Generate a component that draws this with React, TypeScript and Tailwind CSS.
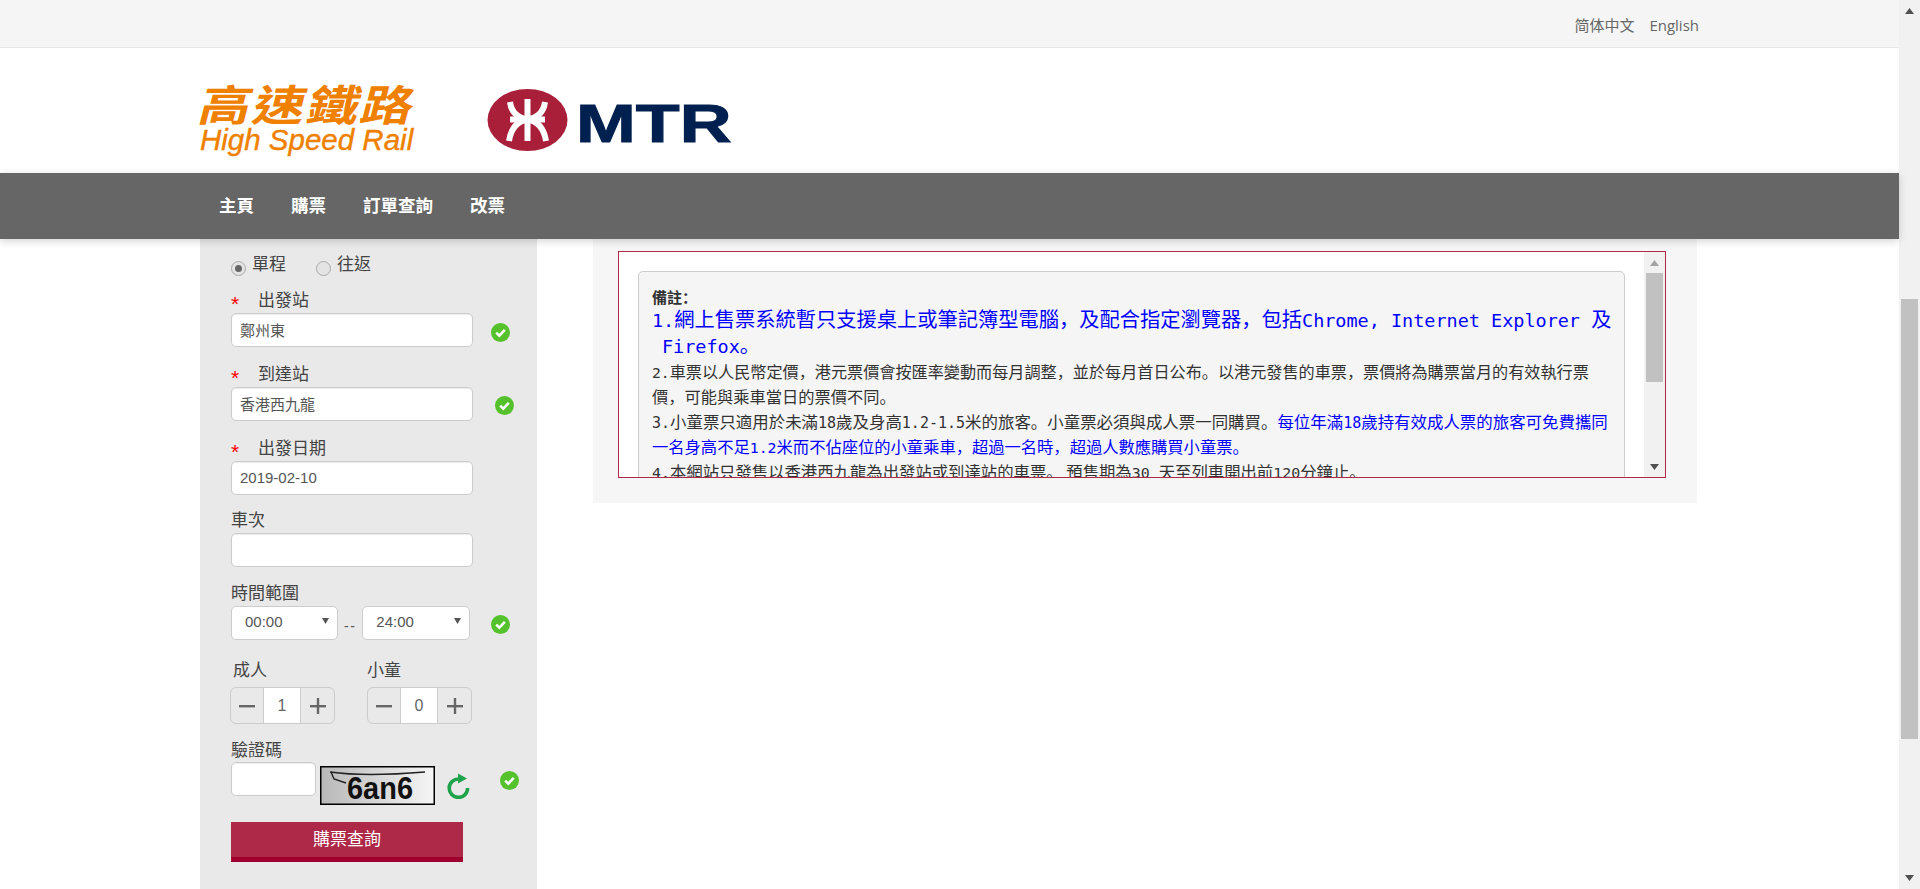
import React from "react";

const sans = "font-['Liberation_Sans','Noto_Sans_CJK_TC',sans-serif]";

function Check({ className = "" }: { className?: string }) {
  return (
    <svg width="19" height="19" viewBox="0 0 19 19" className={`shrink-0 ${className}`}>
      <circle cx="9.5" cy="9.5" r="9.5" fill="#55c22d" />
      <path d="M5.2 9.6 L8.3 12.6 L13.8 6.8" fill="none" stroke="#fff" strokeWidth="2.6" />
    </svg>
  );
}

function Field({ label, w = "w-[242px]", value }: { label?: string; w?: string; value?: string }) {
  return (
    <input
      readOnly
      aria-label={label}
      defaultValue={value}
      className={`${w} h-[34px] shrink-0 rounded-[5px] border border-[#cccccc] bg-white pb-[2px] pl-[8px] text-[15px] text-[#555555] shadow-[inset_0_1px_1px_rgba(0,0,0,0.075)] outline-none`}
    />
  );
}

function Label({ children, required }: { children: React.ReactNode; required?: boolean }) {
  return (
    <div className="flex h-[26px] items-center pt-[2px] text-[17px] leading-[24px] text-[#444444]">
      {required && <span className="w-[27px] translate-y-[3px] text-[21px] leading-[24px] text-[#ff0000]">*</span>}
      <span>{children}</span>
    </div>
  );
}

function TimeSelect({ value, w }: { value: string; w: string }) {
  return (
    <div className={`flex h-[34px] ${w} items-center justify-between rounded-[5px] border border-[#cccccc] bg-white pb-[2px] pl-[13px] pr-[6px] text-[15px] text-[#555555]`}>
      <span>{value}</span>
      <svg width="8" height="8" viewBox="0 0 8 8" className="mb-[2px] mr-[1px]">
        <path d="M0 1 H7 L3.5 7 Z" fill="#555555" />
      </svg>
    </div>
  );
}

function Stepper({ value }: { value: string }) {
  return (
    <div className="flex h-[37px] w-[105px] rounded-[6px] border border-[#cccccc] text-[16px] text-[#666666]">
      <div className="flex w-[32px] items-center justify-center">
        <svg width="16" height="16" viewBox="0 0 16 16"><rect x="0" y="7" width="16" height="2.4" fill="#666666" /></svg>
      </div>
      <div className="flex w-[38px] items-center justify-center border-x border-[#cccccc] bg-white">{value}</div>
      <div className="flex flex-1 items-center justify-center">
        <svg width="16" height="16" viewBox="0 0 16 16">
          <rect x="0" y="7" width="16" height="2.4" fill="#666666" />
          <rect x="6.8" y="0" width="2.4" height="16" fill="#666666" />
        </svg>
      </div>
    </div>
  );
}

function Captcha() {
  return (
    <svg width="115" height="39" viewBox="0 0 115 39" className="ml-[4px] mt-[4px] shrink-0">
      <defs>
        <linearGradient id="cg" x1="0" x2="1" y1="0" y2="0">
          <stop offset="0" stopColor="#b8b8b8" />
          <stop offset="1" stopColor="#f6f6f6" />
        </linearGradient>
      </defs>
      <rect x="0.75" y="0.75" width="113.5" height="37.5" fill="url(#cg)" stroke="#000" strokeWidth="1.5" />
      <path d="M10 6 Q45 11 105 6" fill="none" stroke="#222" strokeWidth="1.4" />
      <path d="M11 6 L14 13 L26 17" fill="none" stroke="#222" strokeWidth="1.4" />
      <text x="27" y="33" fontFamily="'Liberation Sans', sans-serif" fontWeight="700" fontSize="31" fill="#111" textLength="66" lengthAdjust="spacingAndGlyphs">6an6</text>
    </svg>
  );
}

function Refresh() {
  return (
    <svg width="24" height="26" viewBox="0 0 24 26" className="ml-[11px] mt-[11px] shrink-0">
      <path d="M13 6 A9.2 9.2 0 1 0 21.6 15" fill="none" stroke="#1fa34a" strokeWidth="3.6" />
      <path d="M12 0.5 L21 5.5 L12 10.5 Z" fill="#1fa34a" />
    </svg>
  );
}

function ScrollArrow({ down, color }: { down?: boolean; color: string }) {
  return (
    <svg width="9" height="6" viewBox="0 0 9 6">
      <path d={down ? "M0 0 H9 L4.5 6 Z" : "M0 6 H9 L4.5 0 Z"} fill={color} />
    </svg>
  );
}

const L = ({ children }: { children: React.ReactNode }) => (
  <span className="font-['DejaVu_Sans_Mono',monospace] text-[0.913em]">{children}</span>
);

function Line({ children, className = "" }: { children: React.ReactNode; className?: string }) {
  return <div className={`h-[25px] whitespace-nowrap leading-[25px] ${className}`}>{children}</div>;
}

export default function App() {
  return (
    <div className={`flex h-[889px] overflow-hidden bg-white ${sans}`}>
      <div className="flex min-w-0 flex-1 flex-col">
        {/* top bar */}
        <div className="flex h-[48px] shrink-0 items-center justify-end gap-[15px] border-b border-[#e7e7e7] bg-[#f5f5f5] pt-[4px] pr-[200px] text-[#666666]">
          <span className="font-['Noto_Sans_CJK_SC',sans-serif] text-[15px]">简体中文</span>
          <span className="font-['Open_Sans',sans-serif] text-[15px]">English</span>
        </div>

        {/* logos */}
        <div className="flex h-[125px] shrink-0 items-start bg-white pl-[200px]">
          <div className="mt-[33px] w-[220px] text-[#f08000]">
            <div className="h-[44px] origin-left skew-x-[-12deg] scale-y-[0.82] whitespace-nowrap pl-[1px] font-['Noto_Sans_CJK_TC',sans-serif] text-[52px] font-bold leading-[44px] tracking-[2px]">高速鐵路</div>
            <div className="h-[30px] whitespace-nowrap font-['Liberation_Sans',sans-serif] text-[29.5px] italic leading-[30px] [-webkit-text-stroke:0.4px_#f08000]">High Speed Rail</div>
          </div>
          <svg width="81" height="62" viewBox="0 0 81 62" className="ml-[67px] mt-[41px] shrink-0">
            <ellipse cx="40.5" cy="31" rx="40" ry="31" fill="#a91f3a" />
            <g fill="none" stroke="#fff" strokeWidth="6">
              <path d="M40.5 10 V52" />
              <path d="M23 30.5 H58" />
              <path d="M23 13 Q25 28 40.5 30.5 Q56 28 58 13" />
              <path d="M22 52 Q25 33 40.5 30.5 Q56 33 59 52" />
            </g>
          </svg>
          <div className="ml-[8px] mt-[45px] h-[60px] origin-left scale-x-[1.33] whitespace-nowrap font-['Liberation_Sans',sans-serif] text-[54px] font-bold leading-[60px] text-[#00204f] [-webkit-text-stroke:1px_#00204f]">MTR</div>
        </div>

        {/* nav */}
        <div className="relative z-10 flex h-[66px] shrink-0 items-center gap-[37px] bg-[#666666] pl-[219px] text-[17.5px] font-bold text-white shadow-[0_2px_8px_rgba(0,0,0,0.18)]">
          <span>主頁</span>
          <span>購票</span>
          <span>訂單查詢</span>
          <span>改票</span>
        </div>

        <div className="flex min-h-0 flex-1 items-start pl-[200px]">
          {/* form */}
          <div className="h-[650px] w-[337px] shrink-0 bg-[#e9e9e9] pl-[31px] pt-[13px]">
            <div className="flex h-[24px] pt-[1px] text-[17px] leading-[24px] text-[#444444]">
              <span className="mt-[8px] flex h-[15px] w-[15px] items-center justify-center rounded-full border border-[#aaaaaa] bg-[#e4e4e4]">
                <span className="h-[7px] w-[7px] rounded-full bg-[#666666]" />
              </span>
              <span className="ml-[6px]">單程</span>
              <span className="ml-[30px] mt-[8px] h-[15px] w-[15px] rounded-full border border-[#aaaaaa] bg-[#e4e4e4]" />
              <span className="ml-[6px]">往返</span>
            </div>

            <div className="mt-[11px]"><Label required>出發站</Label></div>
            <div className="flex items-center">
              <Field value="鄭州東" />
              <Check className="ml-[18px] mt-[4px]" />
            </div>

            <div className="mt-[14px]"><Label required>到達站</Label></div>
            <div className="flex items-center">
              <Field value="香港西九龍" />
              <Check className="ml-[22px] mt-[2px]" />
            </div>

            <div className="mt-[14px]"><Label required>出發日期</Label></div>
            <Field value="2019-02-10" />

            <div className="mt-[12px]"><Label>車次</Label></div>
            <Field />

            <div className="mt-[13px]"><Label>時間範圍</Label></div>
            <div className="flex h-[34px] items-center">
              <TimeSelect value="00:00" w="w-[107px]" />
              <span className="mx-[6px] mt-[6px] text-[14px] leading-none tracking-[1.5px] text-[#555555]">--</span>
              <TimeSelect value="24:00" w="w-[108px]" />
              <Check className="ml-[21px] mt-[2px]" />
            </div>

            <div className="mt-[17px] flex">
              <div className="w-[136px]">
                <div className="pl-[2px]"><Label>成人</Label></div>
                <div className="-ml-[1px] mt-[4px]"><Stepper value="1" /></div>
              </div>
              <div>
                <Label>小童</Label>
                <div className="mt-[4px]"><Stepper value="0" /></div>
              </div>
            </div>

            <div className="mt-[13px] h-[25px]"><Label>驗證碼</Label></div>
            <div className="flex h-[43px] items-start">
              <Field w="w-[85px]" />
              <Captcha />
              <Refresh />
              <Check className="ml-[30px] mt-[9px]" />
            </div>

            <button className="mt-[17px] block h-[40px] w-[232px] border-b-[5px] border-[#a00030] bg-[#ae2847] pt-[1px] text-[17px] text-white">
              購票查詢
            </button>
          </div>

          {/* notice */}
          <div className="ml-[56px] h-[264px] w-[1104px] shrink-0 bg-[#f6f6f6] pl-[25px] pt-[12px]">
            <div className="flex h-[227px] w-[1048px] overflow-hidden border border-[#ae2847] bg-white">
              <div className="min-w-0 flex-1 overflow-hidden pl-[19px] pt-[19px]">
                <div className="h-[300px] w-[987px] rounded-[5px] border border-[#cccccc] bg-[#f5f5f5] pl-[13px] pt-[12px] font-['Noto_Sans_CJK_SC','Noto_Sans_CJK_TC',sans-serif] text-[16px] text-[#333333]">
                  <Line className="text-[15px] font-bold">備註：</Line>
                  <Line className="-translate-y-[3px] text-[20.25px] text-[#0000ff]"><L>1.</L>網上售票系統暫只支援桌上或筆記簿型電腦，及配合指定瀏覽器，包括<L>Chrome, Internet Explorer </L>及</Line>
                  <Line className="-translate-y-[2px] pl-[10px] text-[20.25px] text-[#0000ff]"><L>Firefox</L>。</Line>
                  <Line className="text-[16.14px]"><L>2.</L>車票以人民幣定價，港元票價會按匯率變動而每月調整，並於每月首日公布。以港元發售的車票，票價將為購票當月的有效執行票</Line>
                  <Line className="text-[16.25px]">價，可能與乘車當日的票價不同。</Line>
                  <Line className="text-[16.44px]"><L>3.</L>小童票只適用於未滿<L>18</L>歲及身高<L>1.2-1.5</L>米的旅客。小童票必須與成人票一同購買。<span className="text-[#0000ff]">每位年滿<L>18</L>歲持有效成人票的旅客可免費攜同</span></Line>
                  <Line className="text-[16.3px] text-[#0000ff]">一名身高不足<L>1.2</L>米而不佔座位的小童乘車，超過一名時，超過人數應購買小童票。</Line>
                  <Line className="text-[16.37px]"><L>4.</L>本網站只發售以香港西九龍為出發站或到達站的車票。 預售期為<L>30 </L>天至列車開出前<L>120</L>分鐘止。</Line>
                </div>
              </div>
              <div className="flex w-[21px] shrink-0 flex-col items-center justify-between bg-[#f1f1f1] pb-[7px] pt-[8px]">
                <ScrollArrow color="#a3a3a3" />
                <div className="mb-auto mt-[7px] h-[109px] w-[17px] bg-[#c1c1c1]" />
                <ScrollArrow down color="#505050" />
              </div>
            </div>
          </div>
        </div>
      </div>

      {/* page scrollbar */}
      <div className="flex w-[21px] shrink-0 flex-col items-center bg-[#f1f1f1] pb-[8px] pt-[8px]">
        <ScrollArrow color="#505050" />
        <div className="mt-[285px] h-[440px] w-[17px] bg-[#c1c1c1]" />
        <div className="mt-auto"><ScrollArrow down color="#505050" /></div>
      </div>
    </div>
  );
}
